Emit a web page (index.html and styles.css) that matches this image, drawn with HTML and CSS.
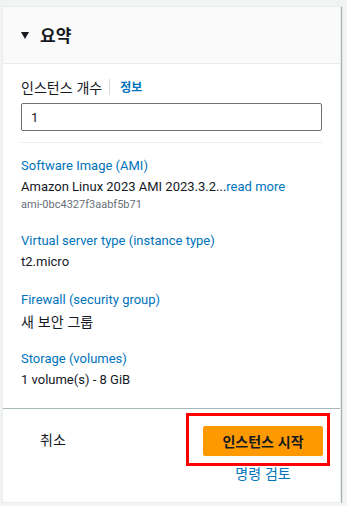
FILE: index.html
```html
<!DOCTYPE html>
<html lang="ko">
<head>
    <meta charset="UTF-8">
    <meta name="viewport" content="width=device-width, initial-scale=1.0">
    <title>요약</title>
<link rel="stylesheet" href="styles.css">
</head>
<body>
    <div class="card">
        <div class="card-head">
            <span class="caret"></span>
            <h2>요약</h2>
        </div>
        <div class="card-body">
            <div class="field-label">
                <span>인스턴스 개수</span>
                <a class="info" href="#">정보</a>
            </div>
            <input class="count" type="text" value="1">
            <div class="sep"></div>

            <div class="group">
                <a class="title" href="#">Software Image (AMI)</a>
                <div class="value">Amazon Linux 2023 AMI 2023.3.2...<a href="#">read more</a></div>
                <div class="sub">ami-0bc4327f3aabf5b71</div>
            </div>
            <div class="group">
                <a class="title" href="#">Virtual server type (instance type)</a>
                <div class="value">t2.micro</div>
            </div>
            <div class="group">
                <a class="title" href="#">Firewall (security group)</a>
                <div class="value ko">새 보안 그룹</div>
            </div>
            <div class="group last">
                <a class="title" href="#">Storage (volumes)</a>
                <div class="value">1 volume(s) - 8 GiB</div>
            </div>
        </div>
        <div class="card-foot">
            <div class="cancel">취소</div>
            <div class="actions">
                <button class="launch">인스턴스 시작</button>
                <a class="review" href="#">명령 검토</a>
                <div class="highlight"></div>
            </div>
        </div>
    </div>
</body>
</html>
```
FILE: styles.css
```css
*{
    margin: 0;
    padding: 0;
    box-sizing: border-box;
}
body{
    background: #f2f3f3;
    font-family: "Noto Sans CJK KR", "Noto Sans", sans-serif;
    font-size: 14px;
    line-height: 20px;
    color: #16191f;
    padding: 6px 0 0 2px;
}
a{
    color: #0073bb;
    text-decoration: none;
}
.card{
    width: 339px;
    height: 497px;
    background: #fff;
    border: 1px solid #eaeded;
    box-shadow: 1px 1px 1px rgba(0, 28, 36, 0.3);
    display: flex;
    flex-direction: column;
}
.card-head{
    height: 57px;
    background: #fafafa;
    border-bottom: 1px solid #eaeded;
    display: flex;
    align-items: center;
    padding-left: 18px;
}
.caret{
    width: 0;
    height: 0;
    border-left: 4px solid transparent;
    border-right: 4px solid transparent;
    border-top: 7px solid #16191f;
    margin-right: 11px;
    margin-top: 1px;
}
.card-head h2{
    font-size: 17px;
    font-weight: 700;
}
.card-body{
    padding: 13px 18px 0 18px;
    flex: 1;
}
.field-label{
    display: flex;
    align-items: center;
    height: 20px;
}
.info{
    font-size: 12px;
    font-weight: 700;
    border-left: 1px solid #d5dbdb;
    margin-left: 7px;
    padding-left: 10px;
    line-height: 16px;
}
.count{
    display: block;
    width: 301px;
    height: 28px;
    margin-top: 6px;
    border: 1px solid #687078;
    border-radius: 2px;
    padding: 0 9px;
    font-family: Roboto, sans-serif;
    font-size: 13px;
    color: #16191f;
}
.sep{
    height: 1px;
    background: #eaeded;
    margin: 11px 0 12px;
    width: 301px;
}
/* 영문 항목은 좁은 글꼴 */
.group{
    margin-bottom: 17px;
    font-family: Roboto, "Noto Sans CJK KR", sans-serif;
    font-size: 13px;
}
.group.last{
    margin-bottom: 0;
}
.title{
    display: block;
    line-height: 22px;
}
.value.ko{
    font-family: "Noto Sans CJK KR", sans-serif;
    font-size: 14px;
}
.sub{
    font-size: 11px;
    line-height: 16px;
    color: #687078;
}
.card-foot{
    height: 94px;
    border-top: 1px solid #aab7b8;
    display: flex;
    padding: 17px 17px 0 37px;
}
.cancel{
    width: 163px;
    padding-top: 3px;
}
.actions{
    position: relative;
    display: flex;
    flex-direction: column;
    align-items: center;
    width: 120px;
}
.launch{
    width: 120px;
    height: 30px;
    background: #ff9900;
    border: none;
    border-radius: 2px;
    font-family: inherit;
    font-size: 14px;
    font-weight: 700;
    color: #16191f;
}
.review{
    margin-top: 7px;
}
/* 강조 표시 */
.highlight{
    position: absolute;
    left: -17px;
    top: -13px;
    width: 144px;
    height: 53px;
    border: 3px solid #ff0000;
}
```
